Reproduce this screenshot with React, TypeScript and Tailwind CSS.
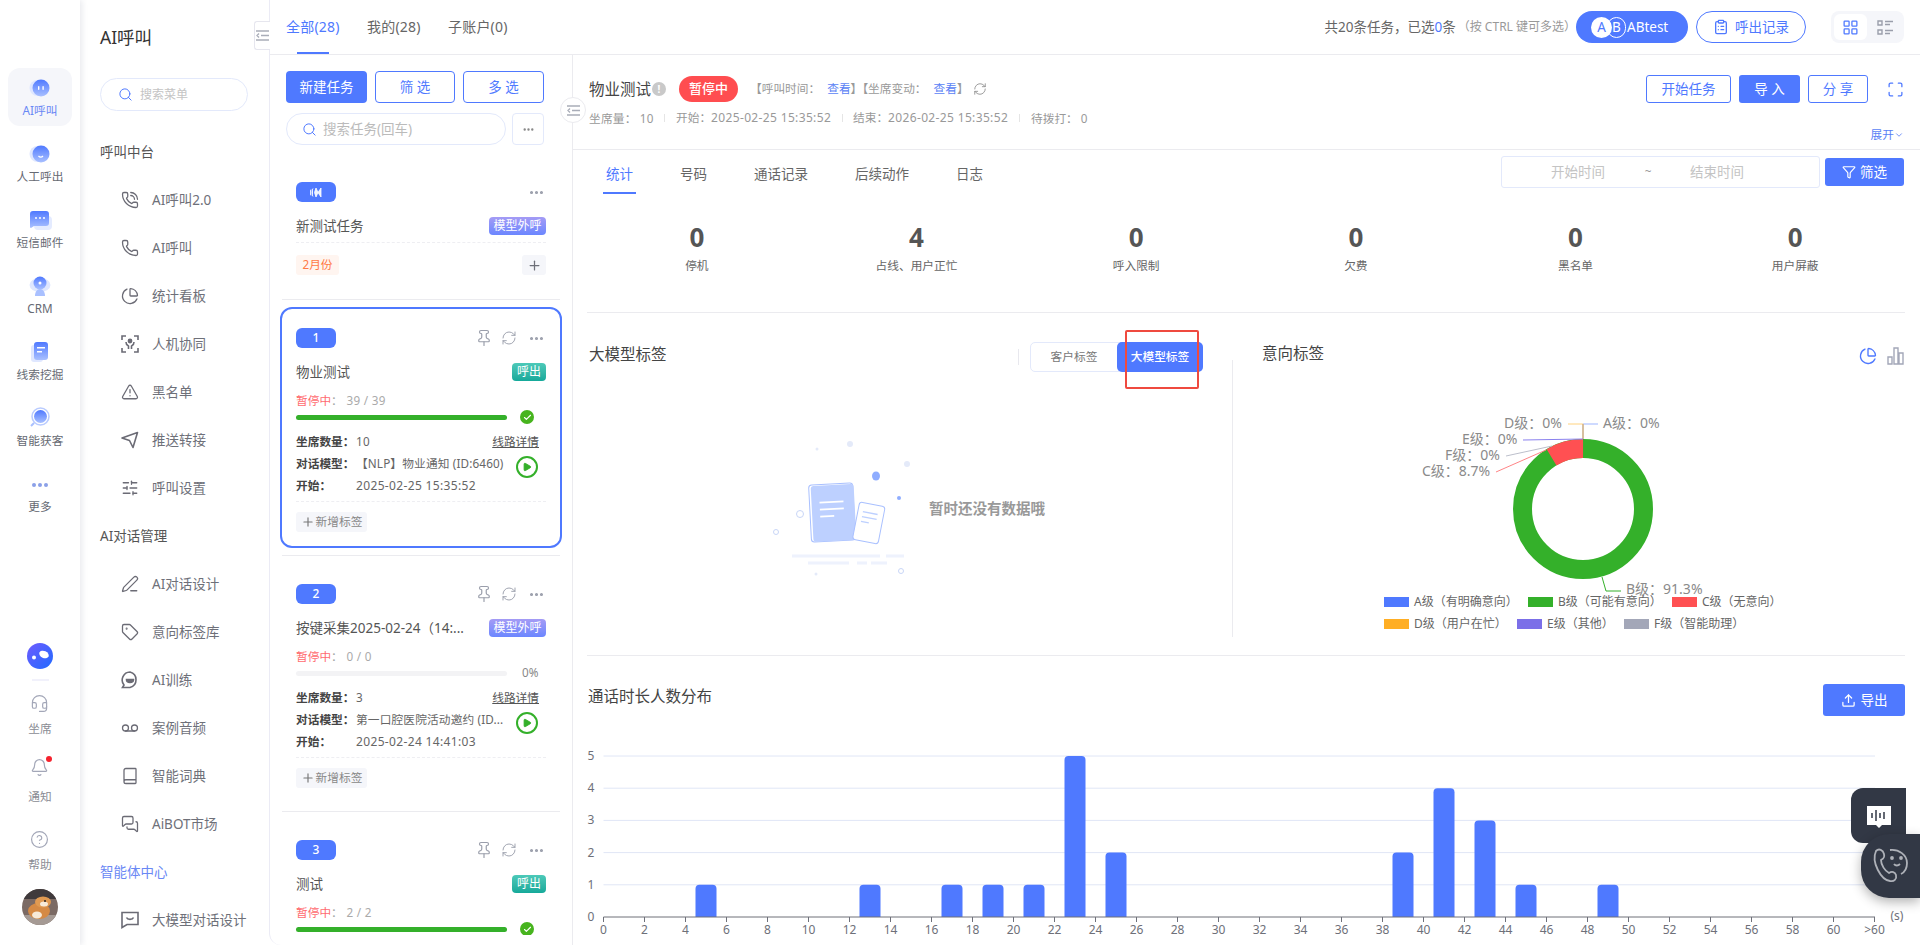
import {
  Bell,
  Book,
  ChartPie,
  Check,
  ChevronDown,
  CircleHelp,
  ClipboardList,
  Ellipsis,
  Funnel,
  Headset,
  LayoutGrid,
  Maximize,
  MessagesSquare,
  PenLine,
  Phone,
  PhoneCall,
  Pin,
  Play,
  Plus,
  RefreshCw,
  Search,
  SlidersHorizontal,
  Tag,
  TriangleAlert,
  Upload,
  Voicemail,
} from "lucide-react";
import type { ReactNode } from "react";

const BLUE = "#4f79ff";

function CollapseIcon() {
  return (
    <svg width="13" height="11" viewBox="0 0 13 11" fill="none" stroke="#a9adb8" strokeWidth="1.3">
      <path d="M0 1h13M5 5.5h8M0 10h13M3 3.5l-2 2 2 2" />
    </svg>
  );
}

function BlobIcon({ id, children }: { id: string; children: ReactNode }) {
  return (
    <svg width="24" height="24" viewBox="0 0 24 24">
      <defs>
        <linearGradient id={id} x1="0" y1="0" x2="0" y2="1">
          <stop offset="0" stopColor="#4f79ff" />
          <stop offset="1" stopColor="#a9c0ff" />
        </linearGradient>
      </defs>
      {children}
    </svg>
  );
}

const railIcons: Record<string, ReactNode> = {
  AI呼叫: (
    <BlobIcon id="r1">
      <circle cx="9.5" cy="12" r="8" fill="#dfe7ff" />
      <circle cx="13" cy="12" r="8.5" fill="url(#r1)" />
      <rect x="10" y="10" width="1.4" height="4" rx="0.7" fill="#fff" />
      <rect x="14.4" y="10" width="1.4" height="4" rx="0.7" fill="#fff" />
    </BlobIcon>
  ),
  人工呼出: (
    <BlobIcon id="r2">
      <circle cx="9.5" cy="12" r="8" fill="#dfe7ff" />
      <circle cx="13" cy="12" r="8.5" fill="url(#r2)" />
      <path d="M10.5 14c1.2 1.4 3.3 1.4 4.5 0" stroke="#fff" strokeWidth="1.2" fill="none" />
    </BlobIcon>
  ),
  短信邮件: (
    <BlobIcon id="r3">
      <rect x="6" y="8" width="18" height="14" rx="4" fill="#e4ebff" />
      <path d="M2 6a3 3 0 0 1 3-3h13a3 3 0 0 1 3 3v9a3 3 0 0 1-3 3H6l-3 2a1 1 0 0 1-1-1z" fill="url(#r3)" />
      <circle cx="8" cy="10" r="1" fill="#fff" />
      <circle cx="12" cy="10" r="1" fill="#fff" />
      <circle cx="16" cy="10" r="1" fill="#fff" />
    </BlobIcon>
  ),
  CRM: (
    <BlobIcon id="r4">
      <ellipse cx="12" cy="11" rx="10.5" ry="7" fill="#dfe7ff" />
      <circle cx="12" cy="9" r="6.5" fill="url(#r4)" />
      <circle cx="12" cy="9" r="1.5" fill="#fff" />
      <path d="M7 22c0-4 2-7 5-7s5 3 5 7z" fill="#a9c0ff" />
    </BlobIcon>
  ),
  线索挖掘: (
    <BlobIcon id="r5">
      <rect x="3" y="5" width="12" height="17" rx="3" fill="#dfe7ff" />
      <rect x="6" y="2" width="14" height="18" rx="3" fill="url(#r5)" />
      <rect x="9" y="7" width="8" height="1.5" fill="#fff" />
      <rect x="9" y="11" width="5" height="1.5" fill="#fff" />
    </BlobIcon>
  ),
  智能获客: (
    <BlobIcon id="r6">
      <circle cx="12.5" cy="10.5" r="8.5" fill="none" stroke="#b9cbff" strokeWidth="1.5" />
      <circle cx="12.5" cy="10.5" r="6.5" fill="url(#r6)" />
      <path d="M6 17l-3 3" stroke="#a9c0ff" strokeWidth="2" />
    </BlobIcon>
  ),
};

const railItems = ["AI呼叫", "人工呼出", "短信邮件", "CRM", "线索挖掘", "智能获客"];

function RailFoot({
  icon,
  label,
  dot,
  className,
  gapClass,
}: {
  icon: ReactNode;
  label: string;
  dot?: boolean;
  className: string;
  gapClass: string;
}) {
  return (
    <div className={`flex flex-col items-center ${className}`}>
      <div className="relative flex h-[20px] items-center">
        {icon}
        {dot && <span className="absolute -right-[3px] -top-[1px] h-[6px] w-[6px] rounded-full bg-[#f5222d]" />}
      </div>
      <span className={`text-[11.7px] leading-[18px] text-[#8a8c94] ${gapClass}`}>{label}</span>
    </div>
  );
}

function Rail() {
  return (
    <div className="relative z-10 flex w-[80px] shrink-0 flex-col items-center bg-white pt-[64px] shadow-[2px_0_6px_rgba(30,40,80,0.1)]">
      {railItems.map((name, i) => (
        <div key={name} className="flex h-[66px] w-full items-center justify-center">
          <div className={`flex h-[58px] w-[64px] flex-col items-center justify-center rounded-xl ${i === 0 ? "bg-[#f5f6fa]" : ""}`}>
            {railIcons[name]}
            <span className={`mt-[1px] text-[11.7px] leading-[18px] ${i === 0 ? "text-[#6a88f5]" : "text-[#666a73]"}`}>{name}</span>
          </div>
        </div>
      ))}
      <div className="mt-[23px] flex gap-[2px]">
        <span className="h-[4px] w-[4px] rounded-full bg-[#8ba0e8]" />
        <span className="h-[4px] w-[4px] rounded-full bg-[#8ba0e8]" />
        <span className="h-[4px] w-[4px] rounded-full bg-[#8ba0e8]" />
      </div>
      <span className="mt-[10px] text-[11.7px] leading-[18px] text-[#666a73]">更多</span>

      <svg className="mt-[128px]" width="26" height="26" viewBox="0 0 26 26">
        <defs>
          <linearGradient id="logo" x1="0" y1="0" x2="1" y2="1">
            <stop offset="0" stopColor="#6f5bff" />
            <stop offset="1" stopColor="#1f6bff" />
          </linearGradient>
        </defs>
        <circle cx="13" cy="13" r="13" fill="url(#logo)" />
        <ellipse cx="17" cy="11.5" rx="5" ry="3.5" transform="rotate(25 17 11.5)" fill="#fff" />
        <circle cx="7" cy="14.5" r="2" fill="#fff" />
      </svg>
      <div className="mt-[10px] h-[2px] w-[17px] bg-[#f1f1fb]" />
      <RailFoot className="mt-[12px]" gapClass="mt-[6px]" icon={<Headset size={19} color="#a3a7b8" strokeWidth={1.5} />} label="坐席" />
      <RailFoot className="mt-[20px]" gapClass="mt-[10px]" icon={<Bell size={19} color="#a3a7b8" strokeWidth={1.5} />} label="通知" dot />
      <RailFoot className="mt-[24px]" gapClass="mt-[6px]" icon={<CircleHelp size={19} color="#a3a7b8" strokeWidth={1.5} />} label="帮助" />
      <svg className="mt-[16px]" width="36" height="36" viewBox="0 0 36 36">
        <clipPath id="av">
          <circle cx="18" cy="18" r="18" />
        </clipPath>
        <g clipPath="url(#av)">
          <rect width="36" height="36" fill="#7b6a64" />
          <rect width="36" height="10" fill="#3f3a3c" />
          <rect y="26" width="36" height="10" fill="#a59a94" />
          <ellipse cx="17" cy="22" rx="11" ry="8" fill="#d58a45" />
          <ellipse cx="21" cy="13" rx="8" ry="5.5" fill="#e09a52" />
          <ellipse cx="22" cy="15" rx="4" ry="2.5" fill="#f6ead9" />
          <ellipse cx="15" cy="26" rx="5" ry="3.5" fill="#f6ead9" />
          <circle cx="23" cy="12" r="1" fill="#2b2320" />
        </g>
      </svg>
    </div>
  );
}

function MenuPlane() {
  return (
    <svg width="18" height="18" viewBox="0 0 18 18" fill="none" stroke="#6b6b75" strokeWidth="1.6" strokeLinejoin="round">
      <path d="M1 7L16.5 1.5 12 16.5 8.5 9.5z" />
    </svg>
  );
}

function MenuScan() {
  return (
    <svg width="18" height="18" viewBox="0 0 18 18" fill="none" stroke="#6b6b75" strokeWidth="1.6">
      <path d="M1 5V1h4M13 1h4v4M1 13v4h4M13 17h4v-4M5 7c0 3 2 3.5 2.5 4v3M13 7c0 3-2 3.5-2.5 4v3" />
      <circle cx="9" cy="6" r="1.6" fill="#6b6b75" />
    </svg>
  );
}

function MenuChat() {
  return (
    <svg width="18" height="18" viewBox="0 0 18 18" fill="none" stroke="#6b6b75" strokeWidth="1.6">
      <path d="M9 1a8 8 0 0 1 0 15.500H1.500l1.500-2.500A8 8 0 0 1 9 1z" />
      <path d="M5.500 8.500h7c0 2-1.500 3-3.500 3s-3.500-1-3.500-3z" fill="#6b6b75" />
    </svg>
  );
}

function MenuFrame() {
  return (
    <svg width="18" height="18" viewBox="0 0 18 18" fill="none" stroke="#6b6b75" strokeWidth="1.6">
      <path d="M1 1.500h16v12H6l-5 3zM5.500 6.500c1 2.500 6 2.500 7 0" />
    </svg>
  );
}

const ic = { size: 18, color: "#6b6b75", strokeWidth: 1.7 };

type MenuRow = { label: string; icon?: ReactNode; head?: boolean; accent?: boolean };

const menu: MenuRow[] = [
  { label: "呼叫中台", head: true },
  { label: "AI呼叫2.0", icon: <PhoneCall {...ic} /> },
  { label: "AI呼叫", icon: <Phone {...ic} /> },
  { label: "统计看板", icon: <ChartPie {...ic} /> },
  { label: "人机协同", icon: <MenuScan /> },
  { label: "黑名单", icon: <TriangleAlert {...ic} /> },
  { label: "推送转接", icon: <MenuPlane /> },
  { label: "呼叫设置", icon: <SlidersHorizontal {...ic} /> },
  { label: "AI对话管理", head: true },
  { label: "AI对话设计", icon: <PenLine {...ic} /> },
  { label: "意向标签库", icon: <Tag {...ic} /> },
  { label: "AI训练", icon: <MenuChat /> },
  { label: "案例音频", icon: <Voicemail {...ic} /> },
  { label: "智能词典", icon: <Book {...ic} /> },
  { label: "AiBOT市场", icon: <MessagesSquare {...ic} /> },
  { label: "智能体中心", head: true, accent: true },
  { label: "大模型对话设计", icon: <MenuFrame /> },
];

function MenuPanel() {
  return (
    <div className="relative w-[189px] shrink-0 bg-white pl-[20px] pt-[24px]">
      <div className="text-[17.5px] leading-[26px] text-[#333]">AI呼叫</div>
      <div className="mt-[28px] flex h-[33px] w-[148px] items-center rounded-full border border-[#e3e9fb] pl-[17px]">
        <Search size={15} color={BLUE} strokeWidth={1.6} />
        <span className="ml-[7px] text-[12px] text-[#c4c4c4]">搜索菜单</span>
      </div>
      <div className="mt-[17px]">
        {menu.map((row) =>
          row.head ? (
            <div
              key={row.label}
              className={`flex h-[48px] items-center text-[13.500px] ${row.accent ? "text-[#6a88f5]" : "text-[#555]"}`}
            >
              {row.label}
            </div>
          ) : (
            <div key={row.label} className="flex h-[48px] items-center pl-[21px] text-[13.500px] text-[#6e7079]">
              <span className="flex w-[18px] justify-center">{row.icon}</span>
              <span className="ml-[13px]">{row.label}</span>
            </div>
          ),
        )}
      </div>
      <div className="absolute right-0 top-[21px] z-10 flex h-[29px] w-[16px] translate-x-px items-center justify-center rounded-l-[3px] border border-r-0 border-[#e6e6ee] bg-white">
        <CollapseIcon />
      </div>
    </div>
  );
}

function TopBar() {
  return (
    <div className="flex h-[55px] shrink-0 items-start border-b border-[#ebebef] pr-[16px]">
      <div className="flex pl-[16px] text-[14px] leading-[54px] tracking-[0.2px] text-[#666]">
        <div className="relative h-[54px] w-[54px] text-[#4f79ff]">
          全部(28)
          <span className="absolute bottom-0 left-[11px] h-[2px] w-[32px] bg-[#4f79ff]" />
        </div>
        <div className="ml-[27px] w-[54px]">我的(28)</div>
        <div className="ml-[27px]">子账户(0)</div>
      </div>
      <div className="ml-auto flex h-[54px] items-center">
        <span className="text-[13.500px] text-[#666]">
          共20条任务，已选<span className="text-[#4f79ff]">0</span>条
        </span>
        <span className="ml-[2px] text-[12px] text-[#999]">（按 CTRL 键可多选）</span>
        <div className="flex h-[32px] w-[112px] items-center rounded-full bg-[#4f79ff] pl-[15px] text-[13.500px] text-white">
          <span className="flex h-[21px] w-[21px] items-center justify-center rounded-full bg-white text-[#4f79ff]">A</span>
          <span className="-ml-[5px] flex h-[21px] w-[19px] items-center justify-center rounded-full border border-white">B</span>
          <span className="ml-[1px]">ABtest</span>
        </div>
        <div className="ml-[8px] flex h-[32px] w-[110px] items-center justify-center rounded-full border border-[#4f79ff] text-[13.500px] text-[#4f79ff]">
          <ClipboardList size={16} strokeWidth={2} />
          <span className="ml-[6px]">呼出记录</span>
        </div>
        <div className="ml-[25px] flex h-[32px] w-[73px] items-center rounded-[8px] bg-[#f5f6fa] pl-[3px]">
          <span className="flex h-[26px] w-[33px] items-center justify-center rounded-[6px] bg-white">
            <LayoutGrid size={17} color={BLUE} strokeWidth={1.8} />
          </span>
          <span className="ml-[10px]">
            <svg width="16" height="15" viewBox="0 0 16 15" fill="none" stroke="#9a9eab" strokeWidth="1.4">
              <path d="M1 1h4v4H1zM1 10h4v4H1zM8 1.500h8M8 4.500h5M8 10.500h8M8 13.500h5" />
            </svg>
          </span>
        </div>
      </div>
    </div>
  );
}

function IconDots() {
  return <Ellipsis size={17} color="#9a9eab" strokeWidth={2.4} />;
}

function Badge({ children }: { children: ReactNode }) {
  return (
    <span className="flex h-[20px] w-[40px] items-center justify-center rounded-[6px] bg-[#4f79ff] text-[12px] font-medium text-white">
      {children}
    </span>
  );
}

function KindTag({ kind }: { kind: string }) {
  return kind === "呼出" ? (
    <span className="flex h-[18px] w-[34px] items-center justify-center rounded-[4px] bg-gradient-to-b from-[#4cc9b8] to-[#14a99a] text-[12px] text-white">
      呼出
    </span>
  ) : (
    <span className="flex h-[18px] w-[57px] items-center justify-center rounded-[4px] bg-gradient-to-b from-[#a49bf5] to-[#6b86ff] text-[12px] text-white">
      模型外呼
    </span>
  );
}

type Task = {
  no: number;
  title: string;
  kind: string;
  count: string;
  pct: number;
  seats?: number;
  model?: string;
  start?: string;
  active?: boolean;
};

const tasks: Task[] = [
  { no: 1, title: "物业测试", kind: "呼出", count: "39 / 39", pct: 100, seats: 10, model: "【NLP】物业通知 (ID:6460)", start: "2025-02-25 15:35:52", active: true },
  { no: 2, title: "按键采集2025-02-24（14:...", kind: "模型外呼", count: "0 / 0", pct: 0, seats: 3, model: "第一口腔医院活动邀约 (ID...", start: "2025-02-24 14:41:03" },
  { no: 3, title: "测试", kind: "呼出", count: "2 / 2", pct: 100 },
];

function TaskCard({ task }: { task: Task }) {
  return (
    <div
      className={`h-[241px] rounded-xl border-2 px-[14px] pt-[19px] ${task.active ? "border-[#4f79ff]" : "border-transparent"}`}
    >
      <div className="flex h-[20px] items-center">
        <Badge>{task.no}</Badge>
        <Pin className="ml-auto" size={18} color="#9a9eab" strokeWidth={1.6} />
        <RefreshCw className="ml-[8px]" size={16} color="#9a9eab" strokeWidth={1.4} />
        <span className="ml-[11px] mr-[1px]">
          <IconDots />
        </span>
      </div>
      <div className="mt-[15px] flex h-[18px] items-center justify-between">
        <span className="text-[13.500px] text-[#555]">{task.title}</span>
        <KindTag kind={task.kind} />
      </div>
      <div className="mt-[10px] h-[18px] text-[11.700px] leading-[18px]">
        <span className="text-[#ff6b70]">暂停中</span>
        <span className="tracking-[0.3px] text-[#aaa]">： {task.count}</span>
      </div>
      <div className="flex h-[16px] items-center">
        <div className="h-[5px] w-[211px] rounded-full bg-[#f3f3f5]">
          <div className="h-full rounded-full bg-[#34b02a]" style={{ width: `${task.pct}%` }} />
        </div>
        {task.pct === 100 ? (
          <span className="ml-[13px] flex h-[14px] w-[14px] items-center justify-center rounded-full bg-[#47b41e]">
            <Check size={9} color="#fff" strokeWidth={3} />
          </span>
        ) : (
          <span className="ml-[15px] text-[11.700px] text-[#888]">0%</span>
        )}
      </div>
      {task.start && (
        <>
          <div className="mt-[6px] text-[11.700px] text-[#666]">
            <div className="flex h-[22px] items-center">
              <span className="w-[60px] font-bold text-[#444]">坐席数量：</span>
              <span className="tracking-[0.35px]">{task.seats}</span>
              <span className="ml-auto mr-[7px] text-[#555] underline">线路详情</span>
            </div>
            <div className="flex h-[22px] items-center">
              <span className="w-[60px] shrink-0 font-bold text-[#444]">对话模型：</span>
              <span className="w-[150px] shrink-0 whitespace-nowrap tracking-[0.15px]">{task.model}</span>
              <span className="ml-auto mr-[8px] flex h-[22px] w-[22px] translate-y-[3px] items-center justify-center rounded-full border-2 border-[#34b02a]">
                <Play size={10} color="#34b02a" fill="#34b02a" />
              </span>
            </div>
            <div className="flex h-[22px] items-center">
              <span className="w-[60px] font-bold text-[#444]">开始：</span>
              <span className="text-[12px] tracking-[0.35px]">{task.start}</span>
            </div>
          </div>
          <div className="mt-[4px] border-t border-dashed border-[#eeeef2]" />
          <div className="mt-[10px] flex h-[20px] w-[71px] items-center justify-center rounded-[3px] bg-[#f5f6fa] text-[11.700px] text-[#888]">
            <Plus size={14} color="#777" />
            <span className="ml-[1px]">新增标签</span>
          </div>
        </>
      )}
    </div>
  );
}

function TaskColumn() {
  return (
    <div className="flex w-[302px] shrink-0 flex-col">
      <div className="flex gap-[8px] pl-[16px] pt-[16px] text-[13.500px]">
        <div className="flex h-[32px] w-[81px] items-center justify-center rounded-[4px] bg-[#4f79ff] text-white">新建任务</div>
        <div className="flex h-[32px] w-[80px] items-center justify-center rounded-[4px] border border-[#4f79ff] text-[#4f79ff]">筛 选</div>
        <div className="flex h-[32px] w-[81px] items-center justify-center rounded-[4px] border border-[#4f79ff] text-[#4f79ff]">多 选</div>
      </div>
      <div className="flex gap-[6px] pl-[16px] pt-[10px]">
        <div className="flex h-[32px] w-[220px] items-center rounded-full border border-[#e3e9fb] pl-[15px] text-[13.500px] text-[#bbb]">
          <Search size={15} color={BLUE} strokeWidth={1.6} />
          <span className="ml-[6px]">搜索任务(回车)</span>
        </div>
        <div className="flex h-[32px] w-[32px] items-center justify-center rounded-[4px] border border-[#e3e9fb]">
          <Ellipsis size={13} color="#888" strokeWidth={2.4} />
        </div>
      </div>
      <div className="mt-[16px] h-[774px] overflow-hidden px-[10px] pt-[21px]">
        <div className="flex h-[20px] items-center px-[16px]">
          <span className="flex h-[20px] w-[40px] items-center justify-center rounded-[6px] bg-[#4f79ff]">
            <svg width="13" height="11" viewBox="0 0 13 11" fill="#fff">
              <path d="M6 1L8 5.500 6 10 4.500 5.500zM11 1v9l-3-4.500zM1 2.500c-1 2-1 4 0 6M3 1.500c-1.500 2.500-1.500 5.500 0 8" stroke="#fff" strokeWidth="0.8" fillOpacity="0.9" />
            </svg>
          </span>
          <span className="ml-auto mr-[1px]">
            <IconDots />
          </span>
        </div>
        <div className="mt-[15px] flex h-[18px] items-center justify-between px-[16px]">
          <span className="text-[13.500px] text-[#555]">新测试任务</span>
          <KindTag kind="模型外呼" />
        </div>
        <div className="mx-[16px] mt-[7px] border-t border-dashed border-[#eeeef2]" />
        <div className="mt-[12px] flex h-[20px] items-center justify-between px-[16px]">
          <span className="flex h-[20px] w-[43px] items-center justify-center rounded-[3px] bg-[#fff5f0] text-[11.700px] text-[#ff7a45]">
            2月份
          </span>
          <span className="flex h-[20px] w-[24px] items-center justify-center rounded-[3px] bg-[#f5f6fa]">
            <Plus size={15} color="#6e7079" />
          </span>
        </div>
        {tasks.map((task) => (
          <div key={task.no}>
            <div className={`mx-[2px] h-[1px] bg-[#ebebef] ${task.no === 1 ? "mb-[7px] mt-[24px]" : "my-[7px]"}`} />
            <TaskCard task={task} />
          </div>
        ))}
      </div>
    </div>
  );
}

const stats = [
  ["0", "停机"],
  ["4", "占线、用户正忙"],
  ["0", "呼入限制"],
  ["0", "欠费"],
  ["0", "黑名单"],
  ["0", "用户屏蔽"],
];

function DetailHeader() {
  return (
    <div className="relative h-[95px] shrink-0 border-b border-[#ebebef] pl-[16px] pr-[16px]">
      <div className="flex items-center pt-[20px]">
        <span className="text-[15.500px] leading-[28px] text-[#444]">物业测试</span>
        <span className="ml-[1px] flex h-[14px] w-[14px] items-center justify-center rounded-full bg-[#c9c9c9] text-[10px] font-bold text-white">!</span>
        <span className="ml-[13px] flex h-[26px] w-[59px] items-center justify-center rounded-full bg-[#ff4d50] text-[13px] font-medium text-white">暂停中</span>
        <span className="ml-[12px] text-[11.700px] text-[#999]">
          【呼叫时间： <span className="ml-[4px] text-[#5a7ff5]">查看</span>】【坐席变动： <span className="ml-[4px] text-[#5a7ff5]">查看</span>】
        </span>
        <RefreshCw className="ml-[4px]" size={14} color="#888" strokeWidth={1.4} />
        <div className="ml-auto flex text-[13.500px]">
          <div className="flex h-[28px] w-[85px] items-center justify-center rounded-[3px] border border-[#4f79ff] text-[#4f79ff]">开始任务</div>
          <div className="ml-[8px] flex h-[28px] w-[61px] items-center justify-center rounded-[3px] bg-[#4f79ff] text-white">导 入</div>
          <div className="ml-[8px] flex h-[28px] w-[60px] items-center justify-center rounded-[3px] border border-[#4f79ff] text-[#4f79ff]">分 享</div>
          <div className="ml-[19px] flex h-[28px] items-center">
            <Maximize size={17} color={BLUE} strokeWidth={1.8} />
          </div>
        </div>
      </div>
      <div className="mt-[4px] flex items-center text-[11.700px] leading-[20px] text-[#999]">
        <span className="w-[75px] tracking-[0.2px]">坐席量： 10</span>
        <span className="h-[8px] w-px bg-[#e5e5e5]" />
        <span className="ml-[11px] w-[166px]">
          开始：<span className="text-[12px] tracking-[0.35px]">2025-02-25 15:35:52</span>
        </span>
        <span className="h-[8px] w-px bg-[#e5e5e5]" />
        <span className="ml-[10px] w-[166px]">
          结束：<span className="text-[12px] tracking-[0.35px]">2026-02-25 15:35:52</span>
        </span>
        <span className="h-[8px] w-px bg-[#e5e5e5]" />
        <span className="ml-[11px]">待拨打： 0</span>
      </div>
      <div className="absolute bottom-[5px] right-[16px] flex items-center text-[11.700px] text-[#5a7ff5]">
        展开
        <ChevronDown size={10} strokeWidth={2} />
      </div>
    </div>
  );
}

function DetailTabs() {
  const names = ["统计", "号码", "通话记录", "后续动作", "日志"];
  return (
    <div className="flex h-[44px] shrink-0 items-start pl-[30px] pr-[16px] pt-[6px]">
      <div className="flex gap-[41px] text-[13.500px]">
        {names.map((n, i) => (
          <div
            key={n}
            className={`flex h-[38px] items-center border-b-2 px-[3px] ${i === 0 ? "border-[#4f79ff] text-[#4f79ff]" : "border-transparent text-[#666]"}`}
          >
            {n}
          </div>
        ))}
      </div>
      <div className="ml-auto flex h-[32px] w-[319px] items-center rounded-[3px] border border-[#e3e9fb] text-[13.500px] text-[#c4c4c4]">
        <span className="w-[141px] pl-[11px] text-center">开始时间</span>
        <span className="w-[10px] text-center text-[11.700px] text-[#999]">~</span>
        <span className="w-[128px] text-center">结束时间</span>
      </div>
      <div className="ml-[5px] mt-[2px] flex h-[28px] w-[79px] items-center justify-center rounded-[3px] bg-[#4f79ff] text-[13.500px] text-white">
        <Funnel size={14} strokeWidth={2} />
        <span className="ml-[4px]">筛选</span>
      </div>
    </div>
  );
}

function EmptyArt() {
  return (
    <svg width="150" height="180" viewBox="0 0 150 180" className="shrink-0">
      <g fill="#e4eaf9">
        <circle cx="80" cy="24" r="3" />
        <circle cx="47" cy="29" r="1.500" />
        <circle cx="137" cy="44" r="3" />
        <circle cx="46" cy="154" r="1.500" />
      </g>
      <circle cx="129" cy="78" r="2" fill="#8fadff" />
      <ellipse cx="106" cy="56" rx="4" ry="4.500" fill="#8fadff" />
      <g fill="none" stroke="#c9d6f7" strokeWidth="1">
        <circle cx="30" cy="94" r="3.500" />
        <circle cx="6" cy="112" r="2.500" />
        <circle cx="131" cy="151" r="2.500" />
      </g>
      <g transform="rotate(-3 62 92)">
        <rect x="40" y="64" width="44" height="57" rx="3" fill="#fff" stroke="#a9c0ff" />
        <rect x="42" y="65" width="43" height="56" rx="3" fill="#bdd0ff" />
        <path d="M50 82h24M50 89h24M50 96h14" stroke="#fff" strokeWidth="1.800" />
      </g>
      <g transform="rotate(11 99 102)">
        <rect x="86" y="84" width="26" height="38" rx="3" fill="#fff" stroke="#a9c0ff" />
        <path d="M91 93h15M91 98h15M91 103h8" stroke="#bdd0ff" strokeWidth="1.300" />
      </g>
      <g stroke="#eef2fd" strokeWidth="3">
        <path d="M22 136h88M116 136h18M38 143h41M87 143h10M101 143h16" />
      </g>
    </svg>
  );
}

const pieLabel = { fontSize: 14, fill: "#8a8a8a" };

function DonutChart() {
  const r = 60.5;
  const c = 2 * Math.PI * r;
  const legend = [
    { x: 1384, y: 602, color: "#4f79ff", text: "A级（有明确意向）" },
    { x: 1528, y: 602, color: "#34b02a", text: "B级（可能有意向）" },
    { x: 1672, y: 602, color: "#ff5052", text: "C级（无意向）" },
    { x: 1384, y: 624, color: "#ffae24", text: "D级（用户在忙）" },
    { x: 1517, y: 624, color: "#7b6fe8", text: "E级（其他）" },
    { x: 1624, y: 624, color: "#a3a7b8", text: "F级（智能助理）" },
  ];
  return (
    <svg width="672" height="245" viewBox="1233 400 672 245" className="block">
      <circle cx="1583" cy="509" r={r} fill="none" stroke="#34b02a" strokeWidth="19" />
      <circle
        cx="1583"
        cy="509"
        r={r}
        fill="none"
        stroke="#ff5052"
        strokeWidth="19"
        strokeDasharray={`${c * 0.087} ${c}`}
        transform={`rotate(${-90 - 31.3} 1583 509)`}
      />
      <g fill="none" strokeWidth="1">
        <path d="M1583 439V424H1598" stroke="#9db5ff" />
        <path d="M1583 439V424H1568" stroke="#ffd27f" />
        <path d="M1583 439V424" stroke="#c8a880" />
        <path d="M1583 439L1523 440" stroke="#8a80ee" />
        <path d="M1552 446L1506 456" stroke="#bcbfcb" />
        <path d="M1546 450L1496 472" stroke="#ff8486" />
        <path d="M1602 577L1606 591H1621" stroke="#34b02a" />
      </g>
      <g {...pieLabel}>
        <text x="1504" y="428">D级：0%</text>
        <text x="1603" y="428">A级：0%</text>
        <text x="1462" y="444">E级：0%</text>
        <text x="1445" y="460">F级：0%</text>
        <text x="1422" y="476">C级：8.7%</text>
        <text x="1626" y="594">B级：91.3%</text>
      </g>
      {legend.map((l) => (
        <g key={l.text}>
          <rect x={l.x} y={l.y - 5} width="25" height="10" fill={l.color} />
          <text x={l.x + 30} y={l.y + 4} fontSize="12" fill="#666">
            {l.text}
          </text>
        </g>
      ))}
    </svg>
  );
}

const barValues: [number, number][] = [
  [5, 1],
  [13, 1],
  [17, 1],
  [19, 1],
  [21, 1],
  [23, 5],
  [25, 2],
  [39, 2],
  [41, 4],
  [43, 3],
  [45, 1],
  [49, 1],
];

function BarChart() {
  const x0 = 603.5;
  const step = 41;
  const y0 = 917;
  const unit = 32.2;
  const ticks = Array.from({ length: 32 }, (_, i) => i);
  return (
    <svg width="1318" height="205" viewBox="587 740 1318 205" className="block">
      {[1, 2, 3, 4, 5].map((v) => (
        <line key={v} x1={x0} x2={1875} y1={y0 - v * unit} y2={y0 - v * unit} stroke="#e0e6f6" />
      ))}
      {[0, 1, 2, 3, 4, 5].map((v) => (
        <text key={v} x="591" y={y0 - v * unit + 4} fontSize="12" fill="#6e7079" textAnchor="middle">
          {v}
        </text>
      ))}
      {barValues.map(([n, v]) => {
        const cx = x0 + (n / 2) * step;
        const top = y0 - v * unit;
        return (
          <path
            key={n}
            d={`M${cx - 10.500} ${y0}V${top + 4}q0-4 4-4h13q4 0 4 4V${y0}z`}
            fill="#4f79ff"
          />
        );
      })}
      <line x1={x0} x2={1875} y1={y0} y2={y0} stroke="#6e7079" />
      {ticks.map((i) => (
        <g key={i}>
          <line x1={x0 + i * step} x2={x0 + i * step} y1={y0} y2={y0 + 5} stroke="#6e7079" />
          <text x={x0 + i * step} y={y0 + 17} fontSize="12" fill="#6e7079" textAnchor="middle">
            {i === 31 ? ">60" : i * 2}
          </text>
        </g>
      ))}
      <text x="1897" y={y0 + 3} fontSize="12" fill="#6e7079" textAnchor="middle">
        (s)
      </text>
    </svg>
  );
}

function TagSections() {
  return (
    <div className="flex h-[343px] shrink-0 border-b border-[#ebebef]">
      <div className="w-[645px] shrink-0 pt-[29px]">
        <div className="flex items-start pl-[2px]">
          <span className="text-[15.500px] leading-[24px] text-[#444]">大模型标签</span>
          <span className="ml-auto mr-[11px] mt-[7px] h-[16px] w-px bg-[#e8e8ee]" />
          <div className="relative mr-[29px] flex h-[30px] w-[173px] rounded-[5px] border border-[#e3e9fb] text-[11.700px]">
            <span className="flex w-[86px] items-center justify-center text-[#777]">客户标签</span>
            <span className="-my-px -mr-px flex flex-1 items-center justify-center rounded-[5px] bg-[#4f79ff] font-medium text-white">大模型标签</span>
            <span className="absolute left-[94px] top-[-13px] h-[59px] w-[74px] rounded-[2px] border-2 border-[#ef4a3f]" />
          </div>
        </div>
        <div className="ml-[183px] mt-[48px] flex items-center">
          <EmptyArt />
          <span className="ml-[9px] -translate-y-[1px] text-[14.500px] font-bold text-[#999]">暂时还没有数据哦</span>
        </div>
      </div>
      <div className="mt-[47px] h-[277px] w-px bg-[#ebebef]" />
      <div className="flex-1">
        <div className="flex h-[87px] items-start pl-[29px] pt-[28px]">
          <span className="text-[15.500px] leading-[24px] text-[#444]">意向标签</span>
          <ChartPie className="ml-auto mt-[6px]" size={18} color={BLUE} strokeWidth={1.8} />
          <svg className="ml-[10px] mr-px mt-[6px]" width="17" height="18" viewBox="0 0 17 18" fill="none" stroke="#a3a7b8" strokeWidth="1.4">
            <path d="M1 10h4v7H1zM7 1h4v16H7zM12 6h4v11h-4z" />
          </svg>
        </div>
        <DonutChart />
      </div>
    </div>
  );
}

function DetailPane() {
  return (
    <div className="relative flex min-w-0 flex-1 flex-col border-l border-[#ebebef]">
      <span className="absolute -left-[13px] top-[42px] z-10 flex h-[26px] w-[26px] items-center justify-center rounded-full border border-[#ebebef] bg-white">
        <CollapseIcon />
      </span>
      <DetailHeader />
      <DetailTabs />
      <div className="flex min-h-0 flex-1 flex-col pl-[14px] pr-[15px]">
        <div className="grid h-[119px] shrink-0 grid-cols-6 border-b border-[#ebebef] pt-[28px]">
          {stats.map(([num, label]) => (
            <div key={label} className="flex flex-col items-center">
              <span className="text-[26px] font-bold leading-[30px] text-[#555]">{num}</span>
              <span className="mt-[3px] text-[11.700px] leading-[20px] text-[#666]">{label}</span>
            </div>
          ))}
        </div>
        <TagSections />
        <div className="flex h-[84px] shrink-0 items-start pt-[28px]">
          <span className="ml-px text-[15.500px] leading-[24px] text-[#444]">通话时长人数分布</span>
          <div className="ml-auto flex h-[32px] w-[82px] items-center justify-center rounded-[3px] bg-[#4f79ff] text-[13.500px] text-white">
            <Upload size={15} strokeWidth={2} />
            <span className="ml-[5px]">导出</span>
          </div>
        </div>
        <BarChart />
      </div>
    </div>
  );
}

function FloatWidgets() {
  return (
    <>
      <div className="absolute left-[1851px] top-[788px] flex h-[55px] w-[55px] items-center justify-center rounded-l-[12px] bg-[#323845]">
        <svg width="24" height="24" viewBox="0 0 24 24">
          <path d="M0 2h24v19h-9l-3 3-3-3H0z" fill="#fff" />
          <path d="M5 9v5M9 6v11M13 9v5M17 8v7" stroke="#323845" strokeWidth="1.500" />
        </svg>
      </div>
      <div className="absolute left-[1861px] top-[834px] flex h-[64px] w-[59px] items-center rounded-l-[28px] bg-[#323845] pl-[10px] shadow-[0_4px_12px_rgba(0,0,0,0.3)]">
        <svg width="38" height="38" viewBox="0 0 38 38" fill="none" stroke="#aeb1b8" strokeWidth="1.800">
          <path d="M5 4c3-3 7-1 8 3s-1 5-3 6c0 5 4 11 8 13 3-2 6-1 7 2 1 4-2 7-6 6C10 33 0 15 5 4z" />
          <path d="M19 3c9-1 17 5 17 13 0 5-2 9-6 11" />
          <circle cx="21" cy="11" r="1" fill="#aeb1b8" />
          <circle cx="30" cy="11" r="1" fill="#aeb1b8" />
          <path d="M23 17c1.500 2 4 2 6 0" />
        </svg>
      </div>
    </>
  );
}

export default function App() {
  return (
    <div className="relative flex h-[945px] w-[1920px] overflow-hidden bg-white font-['Noto_Sans','Noto_Sans_CJK_SC',sans-serif]">
      <Rail />
      <MenuPanel />
      <div className="flex min-w-0 flex-1 flex-col rounded-bl-[12px] border-l border-[#ebebf5]">
        <TopBar />
        <div className="flex min-h-0 flex-1">
          <TaskColumn />
          <DetailPane />
        </div>
      </div>
      <FloatWidgets />
    </div>
  );
}
